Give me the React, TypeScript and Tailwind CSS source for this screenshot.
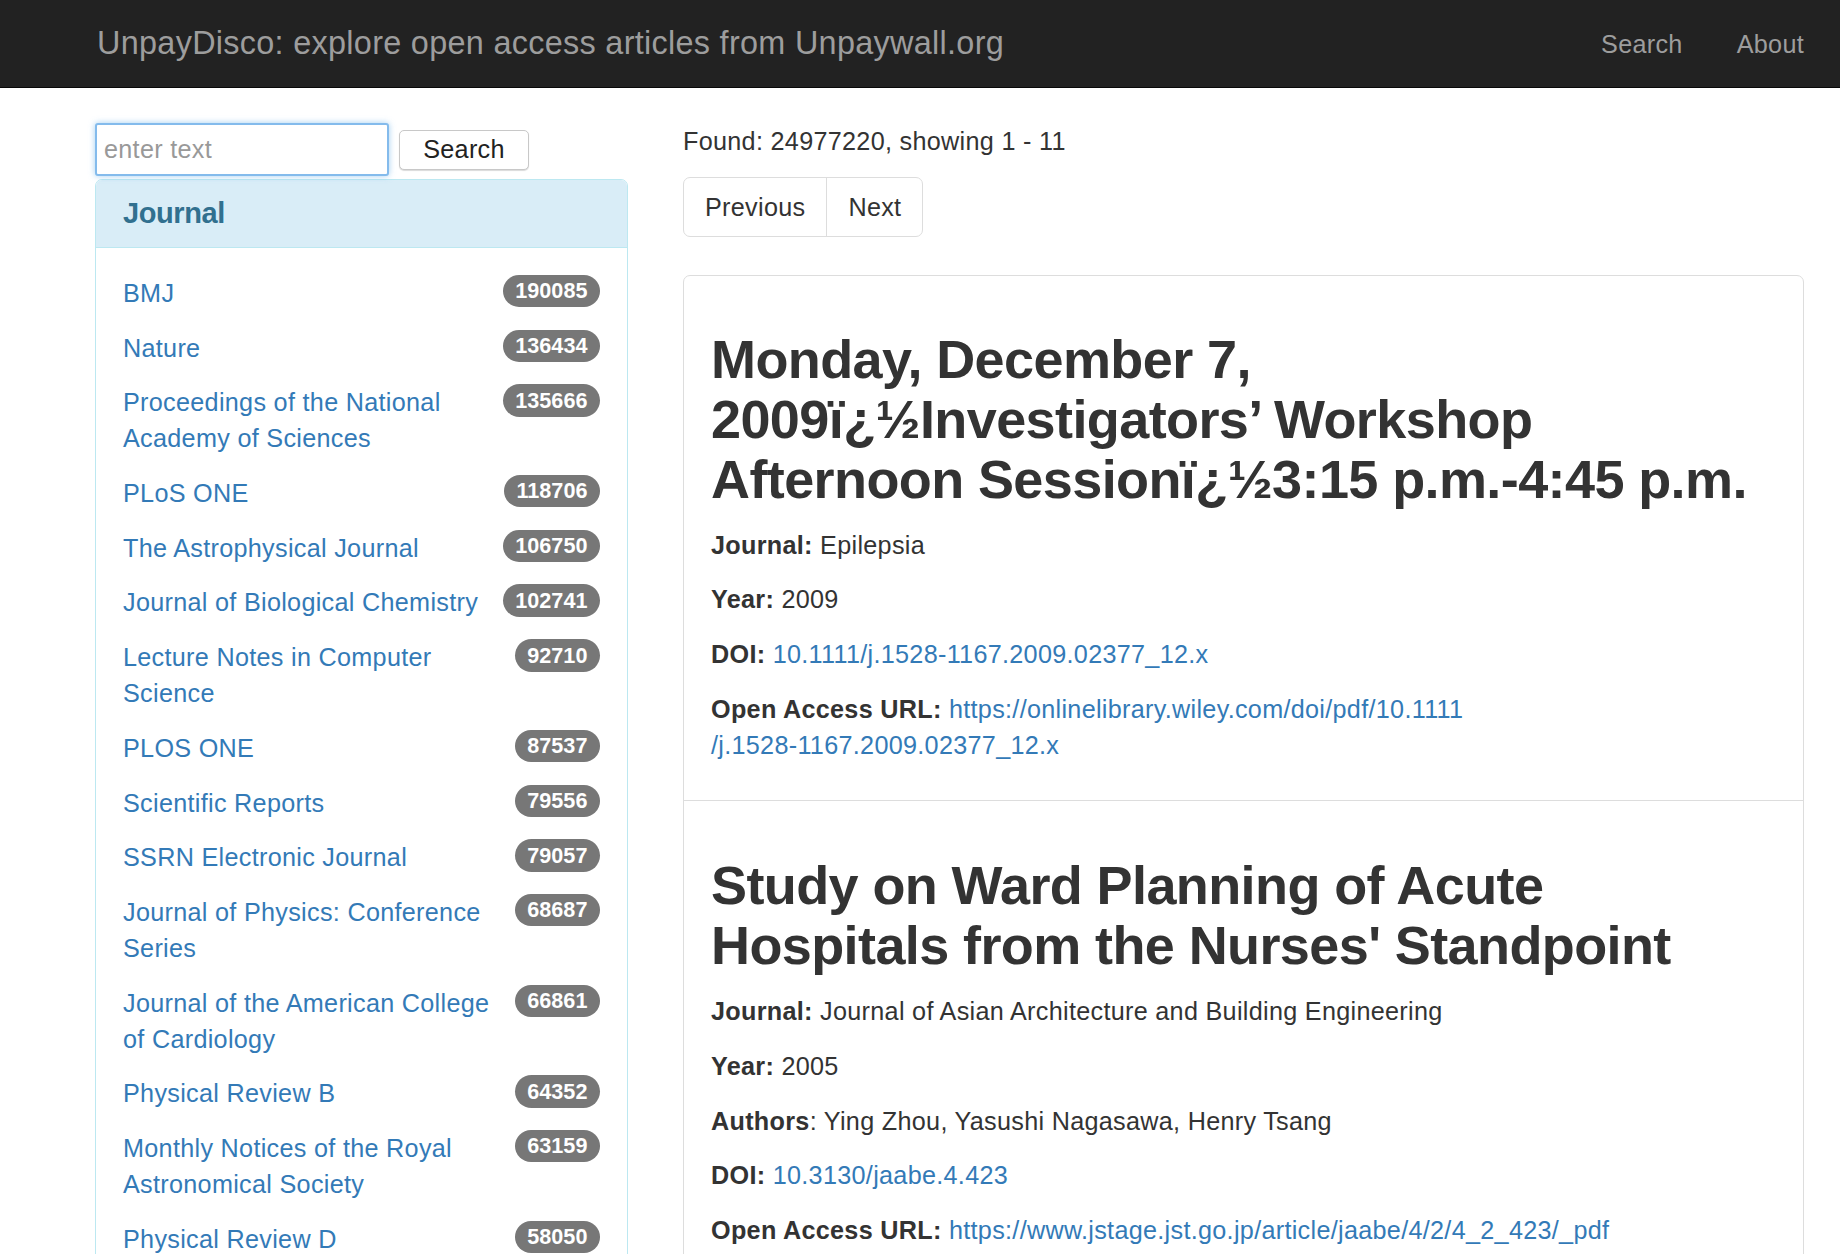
import React from "react";

const journals: { name: string; count: string }[] = [
  { name: "BMJ", count: "190085" },
  { name: "Nature", count: "136434" },
  { name: "Proceedings of the National Academy of Sciences", count: "135666" },
  { name: "PLoS ONE", count: "118706" },
  { name: "The Astrophysical Journal", count: "106750" },
  { name: "Journal of Biological Chemistry", count: "102741" },
  { name: "Lecture Notes in Computer Science", count: "92710" },
  { name: "PLOS ONE", count: "87537" },
  { name: "Scientific Reports", count: "79556" },
  { name: "SSRN Electronic Journal", count: "79057" },
  { name: "Journal of Physics: Conference Series", count: "68687" },
  { name: "Journal of the American College of Cardiology", count: "66861" },
  { name: "Physical Review B", count: "64352" },
  { name: "Monthly Notices of the Royal Astronomical Society", count: "63159" },
  { name: "Physical Review D", count: "58050" },
];

function Field({ label, children }: { label: string; children: React.ReactNode }) {
  return (
    <p className="mb-[18.7px]">
      <b className="font-bold">{label}</b> {children}
    </p>
  );
}

export default function App() {
  return (
    <div className="h-[1254px] overflow-hidden bg-white font-['Liberation_Sans',Arial,sans-serif] text-[25.2px] leading-[36px] tracking-[0.3px] text-[#333]">
      <nav className="flex h-[88px] items-center justify-between border-b border-[#080808] bg-[#222] pl-[97px] pr-[36px]">
        <span className="text-[32.4px] leading-none text-[#9d9d9d]">
          UnpayDisco: explore open access articles from Unpaywall.org
        </span>
        <div className="flex gap-[54px] text-[#9d9d9d]">
          <span>Search</span>
          <span>About</span>
        </div>
      </nav>

      <div className="flex gap-[55px] pl-[95px] pt-[35px]">
        <aside className="w-[533px] shrink-0">
          <div className="flex items-center gap-[10px]">
            <input
              type="text"
              placeholder="enter text"
              className="h-[53px] w-[294px] rounded-[3px] border-2 border-[#84bbec] bg-white px-[7px] text-[25.2px] text-[#555] shadow-[0_0_6px_rgba(102,175,233,0.6)] outline-none placeholder:text-[#999]"
            />
            <button className="h-[40px] w-[130px] rounded-[5px] border border-[#c8c8c8] bg-white text-[25.2px] leading-none text-[#222] shadow-[0_1px_1px_rgba(0,0,0,0.15)]">
              Search
            </button>
          </div>

          <div className="mt-[3px] rounded-t-[7px] border border-[#bce8f1]">
            <div className="flex h-[68px] items-center rounded-t-[6px] border-b border-[#bce8f1] bg-[#d9edf7] px-[27px]">
              <h4 className="text-[29px] font-bold leading-none tracking-[-0.4px] text-[#31708f]">Journal</h4>
            </div>
            <ul className="px-[27px] pt-[27px] pb-[40px]">
              {journals.map((j) => (
                <li key={j.name} className="mb-[18.7px] flex items-start justify-between">
                  <a className="w-[378px] text-[#337ab7]">{j.name}</a>
                  <span className="shrink-0 rounded-full bg-[#777] px-[12.6px] py-[5.4px] text-[21.6px] font-bold leading-none tracking-normal text-white">
                    {j.count}
                  </span>
                </li>
              ))}
            </ul>
          </div>
        </aside>

        <main className="w-[1121px] shrink-0">
          <p>Found: 24977220, showing 1 - 11</p>
          <div className="mt-[18px] inline-flex rounded-[7px] border border-[#ddd]">
            <span className="px-[21px] py-[10.8px]">Previous</span>
            <span className="border-l border-[#ddd] px-[21px] py-[10.8px]">Next</span>
          </div>

          <div className="mt-[38px] rounded-[7px] border border-[#ddd]">
            <div className="border-b border-[#ddd] px-[27px] pt-[17px] pb-[19px]">
              <h2 className="mt-[36px] mb-[18px] text-[54px] font-bold leading-[60px] tracking-[-0.6px]">
                Monday, December 7, 2009ï¿½Investigators’ Workshop Afternoon Sessionï¿½3:15 p.m.-4:45 p.m.
              </h2>
              <Field label="Journal:">Epilepsia</Field>
              <Field label="Year:">2009</Field>
              <Field label="DOI:">
                <a className="text-[#337ab7]">10.1111/j.1528-1167.2009.02377_12.x</a>
              </Field>
              <Field label="Open Access URL:">
                <a className="text-[#337ab7]">
                  https://onlinelibrary.wiley.com/doi/pdf/10.1111
                  <br />
                  /j.1528-1167.2009.02377_12.x
                </a>
              </Field>
            </div>
            <div className="px-[27px] pt-[18px] pb-[18px]">
              <h2 className="mt-[36px] mb-[18px] text-[54px] font-bold leading-[60px] tracking-[-0.6px]">
                Study on Ward Planning of Acute Hospitals from the Nurses' Standpoint
              </h2>
              <Field label="Journal:">Journal of Asian Architecture and Building Engineering</Field>
              <Field label="Year:">2005</Field>
              <p className="mb-[18.7px]">
                <b className="font-bold">Authors</b>: Ying Zhou, Yasushi Nagasawa, Henry Tsang
              </p>
              <Field label="DOI:">
                <a className="text-[#337ab7]">10.3130/jaabe.4.423</a>
              </Field>
              <Field label="Open Access URL:">
                <a className="text-[#337ab7]">https://www.jstage.jst.go.jp/article/jaabe/4/2/4_2_423/_pdf</a>
              </Field>
            </div>
          </div>
        </main>
      </div>
    </div>
  );
}
